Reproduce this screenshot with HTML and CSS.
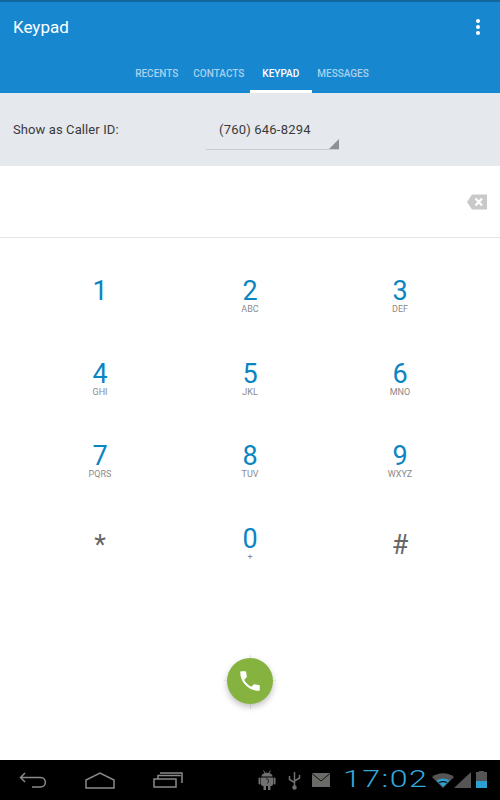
FILE: index.html
```html
<!DOCTYPE html>
<html lang="en">
<head>
  <meta charset="UTF-8" />
  <title>Keypad</title>
  <link rel="stylesheet" href="styles.css">
</head>
<body>
  <div class="screen">
    <div class="app-header">
      <div class="title-row">
        <div class="title">Keypad</div>
        <div class="overflow"><span></span><span></span><span></span></div>
      </div>
      <div class="tabs">
        <div class="tab">RECENTS</div>
        <div class="tab">CONTACTS</div>
        <div class="tab active">KEYPAD</div>
        <div class="tab">MESSAGES</div>
      </div>
    </div>

    <div class="caller-bar">
      <div class="caller-label">Show as Caller ID:</div>
      <div class="caller-select">(760) 646-8294</div>
    </div>

    <div class="number-row">
      <svg class="backspace" width="20" height="16" viewBox="0 0 20 16">
        <path d="M5 0.5H20V15.5H5L0 8Z" fill="#c9c9c9" />
        <path d="M8.5 4.5L15 11.5M15 4.5L8.5 11.5" stroke="#fff" stroke-width="2.2" />
      </svg>
    </div>

    <div class="keypad">
      <div class="key"><div class="digit">1</div></div>
      <div class="key"><div class="digit">2</div><div class="letters">ABC</div></div>
      <div class="key"><div class="digit">3</div><div class="letters">DEF</div></div>
      <div class="key"><div class="digit">4</div><div class="letters">GHI</div></div>
      <div class="key"><div class="digit">5</div><div class="letters">JKL</div></div>
      <div class="key"><div class="digit">6</div><div class="letters">MNO</div></div>
      <div class="key"><div class="digit">7</div><div class="letters">PQRS</div></div>
      <div class="key"><div class="digit">8</div><div class="letters">TUV</div></div>
      <div class="key"><div class="digit">9</div><div class="letters">WXYZ</div></div>
      <div class="key"><div class="digit symbol">*</div></div>
      <div class="key"><div class="digit">0</div><div class="letters">+</div></div>
      <div class="key"><div class="digit symbol">#</div></div>
    </div>

    <div class="call-area">
      <div class="call-button">
        <svg width="26" height="26" viewBox="0 0 24 24">
          <path fill="#fff" d="M6.6 10.8c1.4 2.8 3.8 5.100 6.600 6.600l2.200-2.200c.3-.3.700-.4 1-.2 1.100.4 2.300.6 3.600.6.600 0 1 .4 1 1V20c0 .6-.4 1-1 1C10.600 21 3 13.400 3 4c0-.6.400-1 1-1h3.500c.6 0 1 .4 1 1 0 1.300.2 2.500.6 3.600.1.300 0 .7-.2 1z" />
        </svg>
      </div>
    </div>

    <div class="nav-bar">
      <div class="nav-buttons">
        <svg width="28" height="16" viewBox="0 0 28 16" fill="none" stroke="#8a8a8a" stroke-width="1.5">
          <path d="M6 1L1.500 5.500L6 10M1.500 5.500H21.500C28 5.500 28 15 21.500 15H13" />
        </svg>
        <svg width="30" height="17" viewBox="0 0 30 17" fill="none" stroke="#8a8a8a" stroke-width="1.5">
          <path d="M1 16V8L15 1L29 8V16Z" />
        </svg>
        <svg width="30" height="16" viewBox="0 0 30 16" fill="none" stroke="#8a8a8a" stroke-width="1.500">
          <path d="M1 7H23V15H1ZM5 7V3.500H27V3M7 1H29V11" />
        </svg>
      </div>
      <div class="status-icons">
        <svg width="18" height="20" viewBox="0 0 18 20" fill="#707070">
          <path d="M5.500 0.500L7 3M12.500 0.500L11 3" stroke="#707070" stroke-width="1" />
          <path d="M3.500 6.500C3.500 1.500 14.500 1.500 14.500 6.500Z" />
          <path d="M3 7.500H15V14C15 15.500 14 16 12.500 16H5.500C4 16 3 15.500 3 14Z" />
          <rect x="0.500" y="7.500" width="2" height="7" rx="1" /><rect x="15.500" y="7.500" width="2" height="7" rx="1" />
          <rect x="5.500" y="15" width="2.500" height="5" /><rect x="10" y="15" width="2.500" height="5" />
          <path d="M8 9c2.500-1 3.500 2 1.500 4.500" stroke="#222" fill="none" />
        </svg>
        <svg width="13" height="20" viewBox="0 0 13 20" fill="none" stroke="#707070" stroke-width="1.500">
          <path d="M6.500 2V18M1.500 6V9.500L6.500 12.500M11.500 5V8L6.500 11" />
          <circle cx="6.500" cy="17.500" r="1.500" fill="#707070" />
        </svg>
        <svg class="mail" width="18" height="14" viewBox="0 0 18 14">
          <rect width="18" height="14" fill="#6a6a66" />
          <path d="M0 0.500L9 8L18 0.500" fill="none" stroke="#111" stroke-width="1" />
        </svg>
        <div class="clock">17:02</div>
        <svg class="wifi" width="22" height="15" viewBox="0 0 22 15">
          <path d="M0 4C6-1 16-1 22 4L11 15Z" fill="#555" />
          <path d="M4.500 7.500C8 5 14 5 17.500 7.500L11 14Z" fill="#2ca0d0" />
          <path d="M7 9.500C9.500 8.500 12.500 8.500 15 9.500" stroke="#111" stroke-width="1.200" fill="none" />
        </svg>
        <svg class="signal" width="17" height="16" viewBox="0 0 17 16"><path d="M0 16L17 0V16Z" fill="#555" /></svg>
        <div class="battery"><div class="battery-fill"></div></div>
      </div>
    </div>
  </div>
</body>
</html>
```

FILE: styles.css
```css
body {
  margin: 0;
  font-family: Roboto, sans-serif;
  background: #ffffff;
}

.screen {
  width: 500px;
  height: 800px;
  display: flex;
  flex-direction: column;
  overflow: hidden;
}

.app-header {
  height: 93px;
  box-sizing: border-box;
  background: #1787d0;
  border-top: 2px solid #12679f;
  color: white;
  display: flex;
  flex-direction: column;
}

.title-row {
  height: 50px;
  padding: 0 13px;
  display: flex;
  justify-content: space-between;
  align-items: center;
}

.title {
  font-size: 17px;
}

.overflow {
  display: flex;
  flex-direction: column;
  gap: 2px;
  padding-right: 7px;
}

.overflow span {
  width: 4px;
  height: 4px;
  border-radius: 50%;
  background: white;
}

.tabs {
  flex: 1;
  display: flex;
  justify-content: center;
  align-items: stretch;
  padding-left: 4px;
}

.tab {
  padding: 4px 7.5px 0;
  display: flex;
  align-items: center;
  font-size: 10px;
  font-weight: 500;
  color: #a9d1ee;
  border-bottom: 3px solid transparent;
}

.tab.active {
  color: white;
  padding: 4px 12.5px 0;
  border-bottom-color: white;
  margin: 0 -2px;
}

.caller-bar {
  height: 73px;
  background: #e5e8ed;
  display: flex;
  align-items: center;
  padding-left: 13px;
  font-size: 13px;
  color: #3a3a3a;
}

.caller-label {
  width: 193px;
  letter-spacing: 0.1px;
}

.caller-select {
  width: 133px;
  height: 43px;
  margin-top: -3px;
  box-sizing: border-box;
  padding: 15px 0 0 13px;
  border-bottom: 1px solid #c9ccd1;
  position: relative;
  letter-spacing: 0.2px;
}

.caller-select::after {
  content: "";
  position: absolute;
  right: 0;
  bottom: 0;
  border-left: 10px solid transparent;
  border-bottom: 10px solid #8e9094;
}

.number-row {
  height: 71px;
  border-bottom: 1px solid #e4e4e4;
  display: flex;
  align-items: center;
  justify-content: flex-end;
  padding-right: 13px;
}

.keypad {
  padding: 12px 25px 0;
  display: grid;
  grid-template-columns: repeat(3, 150px);
  grid-auto-rows: 82.5px;
}

.key {
  display: flex;
  flex-direction: column;
  align-items: center;
  padding-top: 28px;
}

.digit {
  font-size: 27px;
  line-height: 26px;
  color: #0a85c4;
}

.digit.symbol {
  color: #666;
  margin-top: 6px;
}

.letters {
  font-size: 9px;
  line-height: 11px;
  color: #8a8a8a;
}

.call-area {
  flex: 1;
  display: flex;
  justify-content: center;
  align-items: flex-start;
  padding-top: 78px;
}

.call-button {
  width: 46px;
  height: 46px;
  border-radius: 50%;
  background: #86b340;
  box-shadow: 0 3px 6px rgba(0, 0, 0, 0.25);
  display: flex;
  align-items: center;
  justify-content: center;
  position: relative;
}

.call-button::before {
  content: "";
  position: absolute;
  z-index: -1;
  left: 23px;
  top: -3px;
  width: 1px;
  height: 54px;
  background: rgba(0, 0, 0, 0.1);
}

.call-button::after {
  content: "";
  position: absolute;
  z-index: -1;
  left: -3px;
  top: 22px;
  width: 52px;
  height: 1px;
  background: rgba(0, 0, 0, 0.06);
}

.nav-bar {
  height: 40px;
  background: #000;
  display: flex;
  justify-content: space-between;
  align-items: center;
  padding: 0 13px 0 19px;
}

.nav-buttons {
  display: flex;
  align-items: center;
  gap: 38px;
}

.status-icons {
  display: flex;
  align-items: center;
  gap: 12px;
}

.mail {
  margin-left: -1px;
}

.clock {
  width: 85px;
  margin-left: 1px;
  font-weight: 300;
  font-size: 23px;
  letter-spacing: 1px;
  line-height: 30px;
  color: #33a9d9;
  transform: scaleX(1.4);
  transform-origin: left center;
}

.wifi {
  margin-left: -8px;
}

.signal {
  margin-left: -12px;
}

.battery {
  width: 11px;
  height: 16px;
  margin-left: -7px;
  background: #555;
  display: flex;
  align-items: flex-end;
  position: relative;
}

.battery::before {
  content: "";
  position: absolute;
  left: 3px;
  top: -1px;
  width: 5px;
  height: 1px;
  background: #555;
}

.battery-fill {
  width: 100%;
  height: 7px;
  background: #2ca0d0;
}
```
